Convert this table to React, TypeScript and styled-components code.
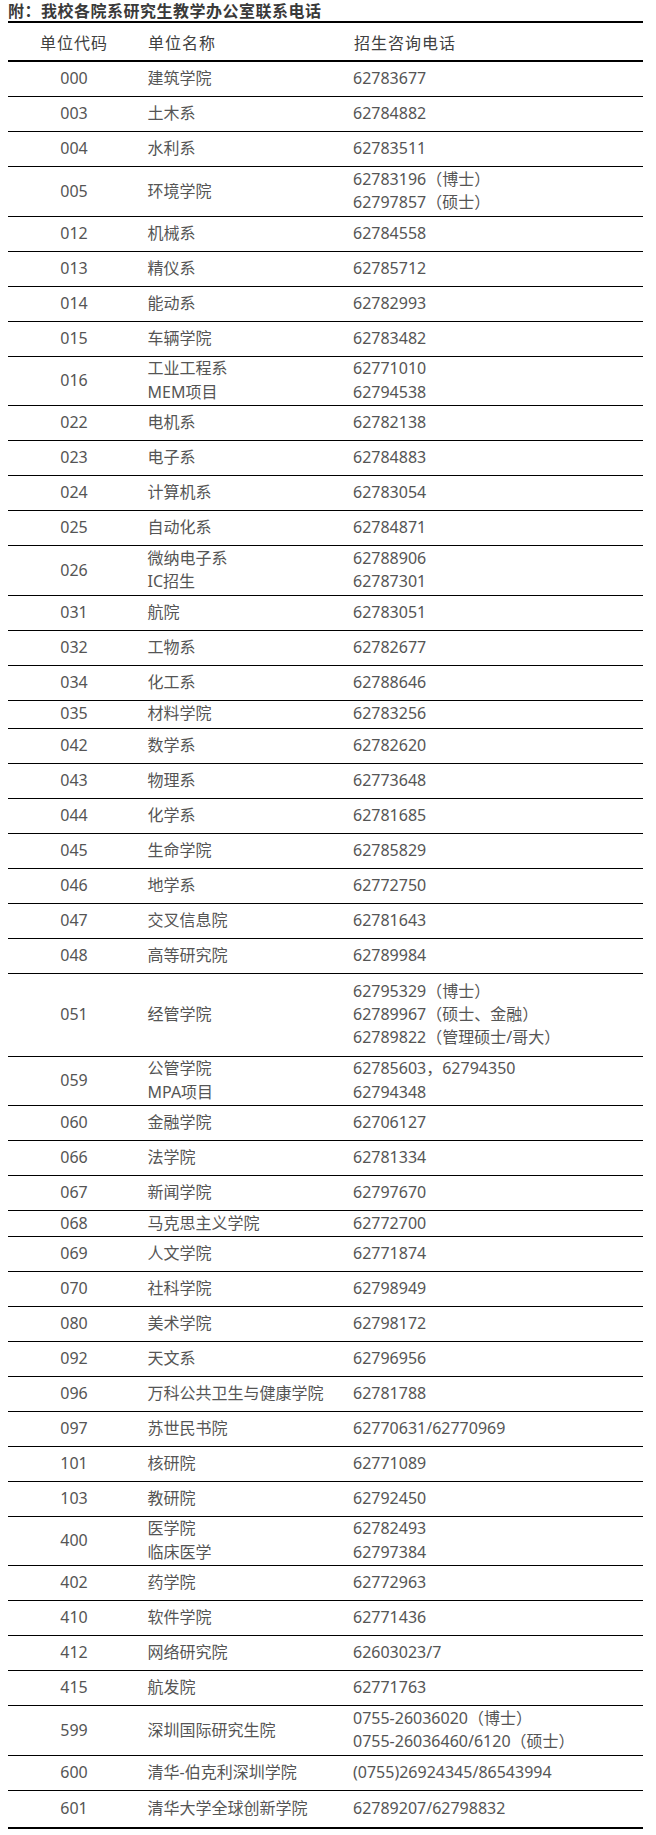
import React from 'react';
import styled, { createGlobalStyle } from 'styled-components';

interface Unit {
  code: string;
  names: string[];
  phones: string[];
  h?: number;
}

const units: Unit[] = [
  { code: '000', names: ['建筑学院'], phones: ['62783677'] },
  { code: '003', names: ['土木系'], phones: ['62784882'] },
  { code: '004', names: ['水利系'], phones: ['62783511'] },
  { code: '005', names: ['环境学院'], phones: ['62783196（博士）', '62797857（硕士）'] },
  { code: '012', names: ['机械系'], phones: ['62784558'] },
  { code: '013', names: ['精仪系'], phones: ['62785712'] },
  { code: '014', names: ['能动系'], phones: ['62782993'] },
  { code: '015', names: ['车辆学院'], phones: ['62783482'] },
  { code: '016', names: ['工业工程系', 'MEM项目'], phones: ['62771010', '62794538'] },
  { code: '022', names: ['电机系'], phones: ['62782138'] },
  { code: '023', names: ['电子系'], phones: ['62784883'] },
  { code: '024', names: ['计算机系'], phones: ['62783054'] },
  { code: '025', names: ['自动化系'], phones: ['62784871'] },
  { code: '026', names: ['微纳电子系', 'IC招生'], phones: ['62788906', '62787301'] },
  { code: '031', names: ['航院'], phones: ['62783051'] },
  { code: '032', names: ['工物系'], phones: ['62782677'] },
  { code: '034', names: ['化工系'], phones: ['62788646'] },
  { code: '035', names: ['材料学院'], phones: ['62783256'], h: 28 },
  { code: '042', names: ['数学系'], phones: ['62782620'] },
  { code: '043', names: ['物理系'], phones: ['62773648'] },
  { code: '044', names: ['化学系'], phones: ['62781685'] },
  { code: '045', names: ['生命学院'], phones: ['62785829'] },
  { code: '046', names: ['地学系'], phones: ['62772750'] },
  { code: '047', names: ['交叉信息院'], phones: ['62781643'] },
  { code: '048', names: ['高等研究院'], phones: ['62789984'] },
  {
    code: '051',
    names: ['经管学院'],
    phones: ['62795329（博士）', '62789967（硕士、金融）', '62789822（管理硕士/哥大）'],
    h: 83,
  },
  { code: '059', names: ['公管学院', 'MPA项目'], phones: ['62785603，62794350', '62794348'] },
  { code: '060', names: ['金融学院'], phones: ['62706127'] },
  { code: '066', names: ['法学院'], phones: ['62781334'] },
  { code: '067', names: ['新闻学院'], phones: ['62797670'] },
  { code: '068', names: ['马克思主义学院'], phones: ['62772700'], h: 25.5 },
  { code: '069', names: ['人文学院'], phones: ['62771874'] },
  { code: '070', names: ['社科学院'], phones: ['62798949'] },
  { code: '080', names: ['美术学院'], phones: ['62798172'] },
  { code: '092', names: ['天文系'], phones: ['62796956'] },
  { code: '096', names: ['万科公共卫生与健康学院'], phones: ['62781788'] },
  { code: '097', names: ['苏世民书院'], phones: ['62770631/62770969'] },
  { code: '101', names: ['核研院'], phones: ['62771089'] },
  { code: '103', names: ['教研院'], phones: ['62792450'] },
  { code: '400', names: ['医学院', '临床医学'], phones: ['62782493', '62797384'] },
  { code: '402', names: ['药学院'], phones: ['62772963'] },
  { code: '410', names: ['软件学院'], phones: ['62771436'] },
  { code: '412', names: ['网络研究院'], phones: ['62603023/7'] },
  { code: '415', names: ['航发院'], phones: ['62771763'] },
  { code: '599', names: ['深圳国际研究生院'], phones: ['0755-26036020（博士）', '0755-26036460/6120（硕士）'] },
  { code: '600', names: ['清华-伯克利深圳学院'], phones: ['(0755)26924345/86543994'] },
  { code: '601', names: ['清华大学全球创新学院'], phones: ['62789207/62798832'], h: 36.5 },
];

const GlobalStyle = createGlobalStyle`
  body {
    margin: 0;
    background: #ffffff;
    font-family: "Noto Sans", "Noto Sans CJK SC", sans-serif;
  }
`;

const Page = styled.div`
  width: 656px;
  padding: 0 13px 0 8px;
  box-sizing: border-box;
`;

const Title = styled.div`
  height: 21px;
  line-height: 21px;
  font-size: 16px;
  font-weight: 700;
  letter-spacing: 0.5px;
  color: #3a3a3a;
  white-space: nowrap;
  font-family: "Noto Sans CJK SC", sans-serif;
`;

const Table = styled.div`
  border-top: 2px solid #000000;
  border-bottom: 2.5px solid #000000;
`;

const Row = styled.div<{ $h: number; $last?: boolean }>`
  display: grid;
  grid-template-columns: 132px 206px 1fr;
  align-items: center;
  height: ${(p) => p.$h}px;
  box-sizing: border-box;
  border-bottom: ${(p) => (p.$last ? 'none' : '1px solid #000000')};
  font-size: 16px;
  line-height: 23.3px;
  color: #555555;
`;

const HeadRow = styled.div`
  display: grid;
  grid-template-columns: 132px 206px 1fr;
  align-items: center;
  height: 39px;
  box-sizing: border-box;
  border-bottom: 2px solid #000000;
  font-family: "Noto Sans CJK SC", sans-serif;
  font-size: 16px;
  letter-spacing: 1px;
  color: #404040;
`;

const Code = styled.div`
  text-align: center;
`;

const Cell = styled.div<{ $pad: number }>`
  padding-left: ${(p) => p.$pad}px;
  white-space: nowrap;
`;

const Line = styled.div``;

const rowHeight = (u: Unit) => {
  if (u.h) return u.h;
  const n = Math.max(u.names.length, u.phones.length);
  return n === 1 ? 35 : 49.5;
};

const App: React.FC = () => {
  return (
    <Page>
      <GlobalStyle />
      <Title>附：我校各院系研究生教学办公室联系电话</Title>
      <Table>
        <HeadRow>
          <Code>单位代码</Code>
          <Cell $pad={8}>单位名称</Cell>
          <Cell $pad={8}>招生咨询电话</Cell>
        </HeadRow>
        {units.map((u, i) => (
          <Row key={u.code} $h={rowHeight(u)} $last={i === units.length - 1}>
            <Code>{u.code}</Code>
            <Cell $pad={7.5}>
              {u.names.map((n) => (
                <Line key={n}>{n}</Line>
              ))}
            </Cell>
            <Cell $pad={7}>
              {u.phones.map((p) => (
                <Line key={p}>{p}</Line>
              ))}
            </Cell>
          </Row>
        ))}
      </Table>
    </Page>
  );
};

export default App;
